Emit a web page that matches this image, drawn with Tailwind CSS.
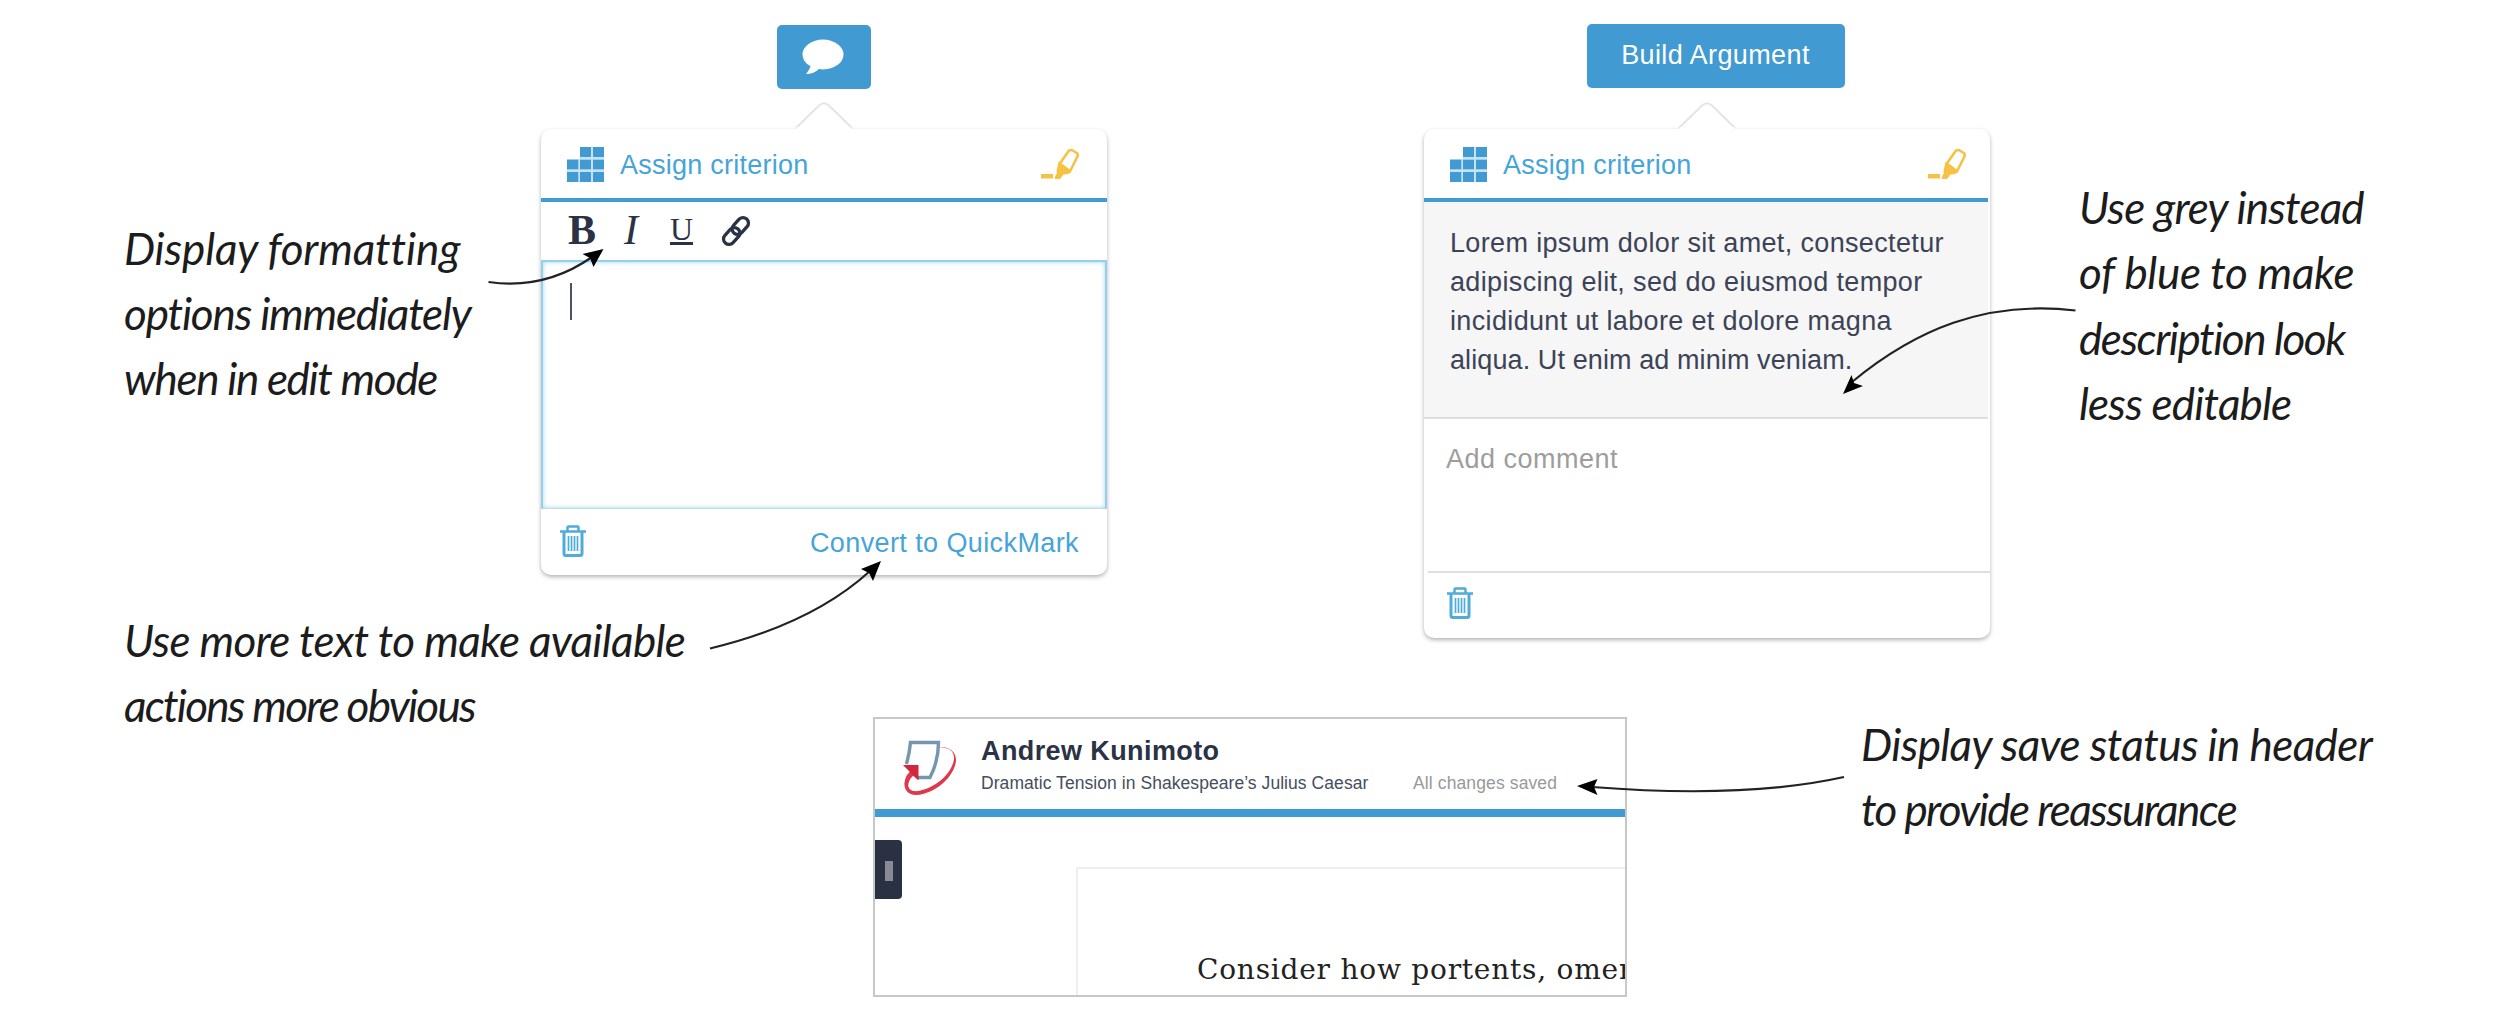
<!DOCTYPE html>
<html lang="en">
<head>
<meta charset="utf-8">
<title>Comment popovers</title>
<script src="https://cdn.jsdelivr.net/npm/@tailwindcss/browser@4"></script>
</head>
<body class="bg-white font-['Liberation_Sans',sans-serif] text-[27px] text-[#2b3245]">

<svg class="hidden">
  <symbol id="grid" viewBox="0 0 37 35">
    <path fill="#419ad2" d="M13 0h11v10H13zM26 0h11v10H26zM0 12.500h11.500v10H0zM13 12.500h11v10H13zM26 12.500h11v10H26zM0 25h11.500v10H0zM13 25h11v10H13zM26 25h11v10H26z"/>
    <path fill="#9fd0ec" d="M0 22.500h37v2.500H0zM11.500 12h1.500v23h-1.500zM24 0h2v35h-2zM13 10h24v2H13z" opacity=".6"/>
  </symbol>
  <symbol id="marker" viewBox="0 0 38 32">
    <path fill="none" stroke="#f6c244" stroke-width="2.600" stroke-linejoin="round" d="M18.500 16 28 2.500l3-.500 5.500 3.500.200 2.500-8 16z"/>
    <path fill="#f6c244" d="M17.500 14 23 17l6.500 5-2 4-5 .5-3.500 4.500h-4l1-4-.5-4zM0 26h12v4.500H0zM15 26l4 1.500-1.500 3.500h-4z"/>
  </symbol>
  <symbol id="trash" viewBox="0 0 26 32">
    <g fill="none" stroke="#4fabda">
      <path stroke-width="2.500" stroke-linejoin="round" d="M7.500 6V2.500q0-1 1-1h9q1 0 1 1V6"/>
      <path stroke-width="2.600" d="M0 6.500h26"/>
      <path stroke-width="3" d="M4 7v21.500q0 2 2 2h14q2 0 2-2V7"/>
      <path stroke-width="1.700" d="M8.500 11v15M11.500 11v15M14.500 11v15M17.500 11v15"/>
    </g>
  </symbol>
  <symbol id="notch" viewBox="0 0 58 27">
    <path fill="#fff" stroke="#e4e4e4" stroke-width="1.800" d="M1 26 24 3.500q5-4.500 10 0L57 26"/>
    <path fill="#fff" d="M2 25h54v2H2z"/>
  </symbol>
</svg>

<main class="relative h-[1034px] w-[2500px] overflow-hidden">

  <section class="flex h-[600px] items-start">
    <div class="ml-[124px] mt-[216px] w-[417px] whitespace-nowrap font-['Lato',sans-serif] text-[44px] leading-[65px] text-[#1c1c1c] italic">
      <p class="tracking-[-0.14px]">Display formatting</p>
      <p class="tracking-[-1.19px]">options immediately</p>
      <p class="tracking-[-1.33px]">when in edit mode</p>
    </div>

    <div class="flex w-[566px] flex-col items-center">
      <button class="mt-[25px] flex h-[64px] w-[94px] items-center justify-center rounded-[5px] bg-[#419ad2]">
        <svg class="mb-[1px] -ml-[2px] h-[36px] w-[42px]" viewBox="0 0 42 36"><path fill="#fff" d="M9 24q0 5-5 11 8 0 13-5z"/><ellipse cx="21" cy="15.500" rx="20.500" ry="15" fill="#fff"/></svg>
      </button>
      <svg class="relative z-10 mt-[13px] h-[27px] w-[58px]"><use href="#notch"/></svg>
      <article class="w-full overflow-hidden rounded-[10px] bg-white shadow-[0_2px_4px_rgba(0,0,0,0.3)]">
        <header class="flex h-[73px] items-center border-b-4 border-[#419ad2] pr-[28px] pl-[26px]">
          <svg class="mt-[1px] h-[35px] w-[37px]"><use href="#grid"/></svg>
          <span class="mt-[3px] ml-[16px] tracking-[0.25px] text-[#45a4d8]">Assign criterion</span>
          <svg class="mt-[1px] ml-auto h-[32px] w-[38px]"><use href="#marker"/></svg>
        </header>
        <div class="flex h-[58px] items-center pb-[2px] pl-[27px] font-['Liberation_Serif',serif] text-[42px]">
          <b class="w-[56px]">B</b>
          <i class="w-[46px]">I</i>
          <span class="mt-[1px] h-[29px] w-[23px] border-b-[3px] border-[#2b3245] text-center text-[32px] leading-[26px]">U</span>
          <svg class="mt-[1px] ml-[28px] h-[32px] w-[30px]" viewBox="0 0 30 32" fill="none" stroke="#2b3245" stroke-width="3.300"><rect x="-5.500" y="-9.500" width="11" height="19" rx="5.500" transform="translate(19.300 11) rotate(42)"/><rect x="-5.500" y="-9.500" width="11" height="19" rx="5.500" transform="translate(10.700 21) rotate(42)"/></svg>
        </div>
        <div class="h-[249px] border-2 border-b-[1px] border-[#96cfe9] border-b-[#c5dbe4] pt-[21px] pl-[27px] shadow-[inset_0_0_5px_#a5d6ee]">
          <div class="h-[37px] w-[2px] bg-[#4c5263]"></div>
        </div>
        <footer class="flex h-[66px] items-start justify-between pt-[16px] pr-[28px] pl-[19px] text-[#45a4d8]">
          <svg class="h-[32px] w-[26px]"><use href="#trash"/></svg>
          <span class="mt-[2px] leading-[33px] tracking-[0.4px]">Convert to QuickMark</span>
        </footer>
      </article>
    </div>

    <div class="ml-[317px] flex w-[566px] flex-col items-center">
      <button class="mt-[24px] ml-[17px] h-[64px] w-[258px] rounded-[5px] bg-[#419ad2] pb-[1px] tracking-[0.4px] text-white">Build Argument</button>
      <svg class="relative z-10 mt-[14px] h-[27px] w-[58px]"><use href="#notch"/></svg>
      <article class="w-full overflow-hidden rounded-[10px] bg-white shadow-[0_2px_4px_rgba(0,0,0,0.3)]">
        <header class="mr-[2px] flex h-[73px] items-center border-b-4 border-[#419ad2] pr-[22px] pl-[26px]">
          <svg class="mt-[1px] h-[35px] w-[37px]"><use href="#grid"/></svg>
          <span class="mt-[3px] ml-[16px] tracking-[0.25px] text-[#45a4d8]">Assign criterion</span>
          <svg class="mt-[1px] ml-auto h-[32px] w-[38px]"><use href="#marker"/></svg>
        </header>
        <p class="mr-[2px] h-[217px] border-b-2 border-[#dedede] bg-[#f6f6f6] pt-[22px] pl-[26px] leading-[39px] tracking-[0.35px] whitespace-nowrap text-[#3c4357]">Lorem ipsum dolor sit amet, consectetur<br>adipiscing elit, sed do eiusmod tempor<br>incididunt ut labore et dolore magna<br><span class="tracking-[0.1px]">aliqua. Ut enim ad minim veniam.</span></p>
        <div class="ml-[4px] h-[154px] border-b-2 border-[#dedede] pt-[20px] pl-[18px] leading-[40px] tracking-[0.5px] text-[#9d9d9d]">Add comment</div>
        <footer class="h-[65px] pt-[14px] pl-[23px]"><svg class="h-[32px] w-[26px]"><use href="#trash"/></svg></footer>
      </article>
    </div>

    <div class="mt-[175px] ml-[89px] whitespace-nowrap font-['Lato',sans-serif] text-[44px] leading-[65.4px] text-[#1c1c1c] italic">
      <p class="tracking-[-0.8px]">Use grey instead</p>
      <p class="tracking-[-0.31px]">of blue to make</p>
      <p class="tracking-[-1.45px]">description look</p>
      <p class="tracking-[-0.8px]">less editable</p>
    </div>
  </section>

  <section class="flex items-start">
    <div class="mt-[8px] ml-[124px] w-[749px] whitespace-nowrap font-['Lato',sans-serif] text-[44px] leading-[65px] text-[#1c1c1c] italic">
      <p class="tracking-[-0.65px]">Use more text to make available</p>
      <p class="tracking-[-1.75px]">actions more obvious</p>
    </div>

    <div class="mt-[117px] h-[280px] w-[754px] overflow-hidden border-2 border-[#c6c8c8] bg-white">
      <header class="flex h-[98px] border-b-8 border-[#419ad2] pl-[28px]">
        <svg class="mt-[20px] h-[56px] w-[54px]" viewBox="0 0 54 56">
          <path fill="none" stroke="#7597ae" stroke-width="3.400" d="M3.500 25Q6.500 14 7.500 3.500H35.500Q35.500 22 27 38.500H15"/>
          <path fill="#dc3a4c" d="M36 8.500C46 6.500 53.500 13 53 22 51.500 37 33 55 13 56 3 56 0 48 2 41q1.500-6 6-9l3.500 3.500C7 39 4.500 44 5.500 48c1.500 4 6 4.500 10 4C32 49 49 35 51 20 51.500 12 46 8 36 8.500z"/>
          <path fill="#d3263a" d="M0 26h15.500v15.500L11 37.500 5 31z"/>
        </svg>
        <div class="ml-[24px]">
          <h1 class="mt-[17px] text-[27px] leading-[30px] font-bold tracking-[0.4px]">Andrew Kunimoto</h1>
          <div class="mt-[6px] flex text-[17.5px] leading-[22px]">
            <span class="w-[432px] whitespace-nowrap tracking-[0.06px] text-[#464d60]">Dramatic Tension in Shakespeare’s Julius Caesar</span>
            <span class="whitespace-nowrap tracking-[0.12px] text-[#999]">All changes saved</span>
          </div>
        </div>
      </header>
      <div class="flex items-start">
        <div class="mt-[23px] flex h-[59px] w-[27px] shrink-0 items-center rounded-r-[4px] bg-[#2a3142] pt-[3px] pl-[10px]"><div class="h-[20px] w-[8px] bg-[#888b95]"></div></div>
        <div class="mt-[50px] ml-[174px] h-[140px] w-[600px] shrink-0 border-t-2 border-l-2 border-[#eee] pt-[76px] pl-[119px] font-['DejaVu_Serif',serif] text-[28px] leading-[50px] tracking-[0.78px] whitespace-nowrap text-[#222]">Consider how portents, omen</div>
      </div>
    </div>

    <div class="mt-[112px] ml-[234px] whitespace-nowrap font-['Lato',sans-serif] text-[44px] leading-[65px] text-[#1c1c1c] italic">
      <p class="tracking-[-0.6px]">Display save status in header</p>
      <p class="tracking-[-1.6px]">to provide reassurance</p>
    </div>
  </section>

  <!-- Callout arrows drawn over the mockups -->
  <svg class="pointer-events-none absolute inset-0 z-20 h-[1034px] w-[2500px]" viewBox="0 0 2500 1034">
    <g fill="none" stroke="#222" stroke-width="2.200">
      <path d="M488.500 282Q545 290 592 257"/>
      <path d="M710 648.500Q812 624 870 571"/>
      <path d="M2075.500 310.500C1985 300 1915 330 1852 382"/>
      <path d="M1844 777Q1745 799 1592 787"/>
    </g>
    <g fill="#000">
      <path d="M603.500 249 582.500 254 590 258 593.500 267z"/>
      <path d="M881 561 861 569 869 573 873 581z"/>
      <path d="M1843 394 1851.500 375 1854 383 1863 386z"/>
      <path d="M1577 786 1597.500 779 1594 787 1597.500 795z"/>
    </g>
  </svg>
</main>
</body>
</html>
